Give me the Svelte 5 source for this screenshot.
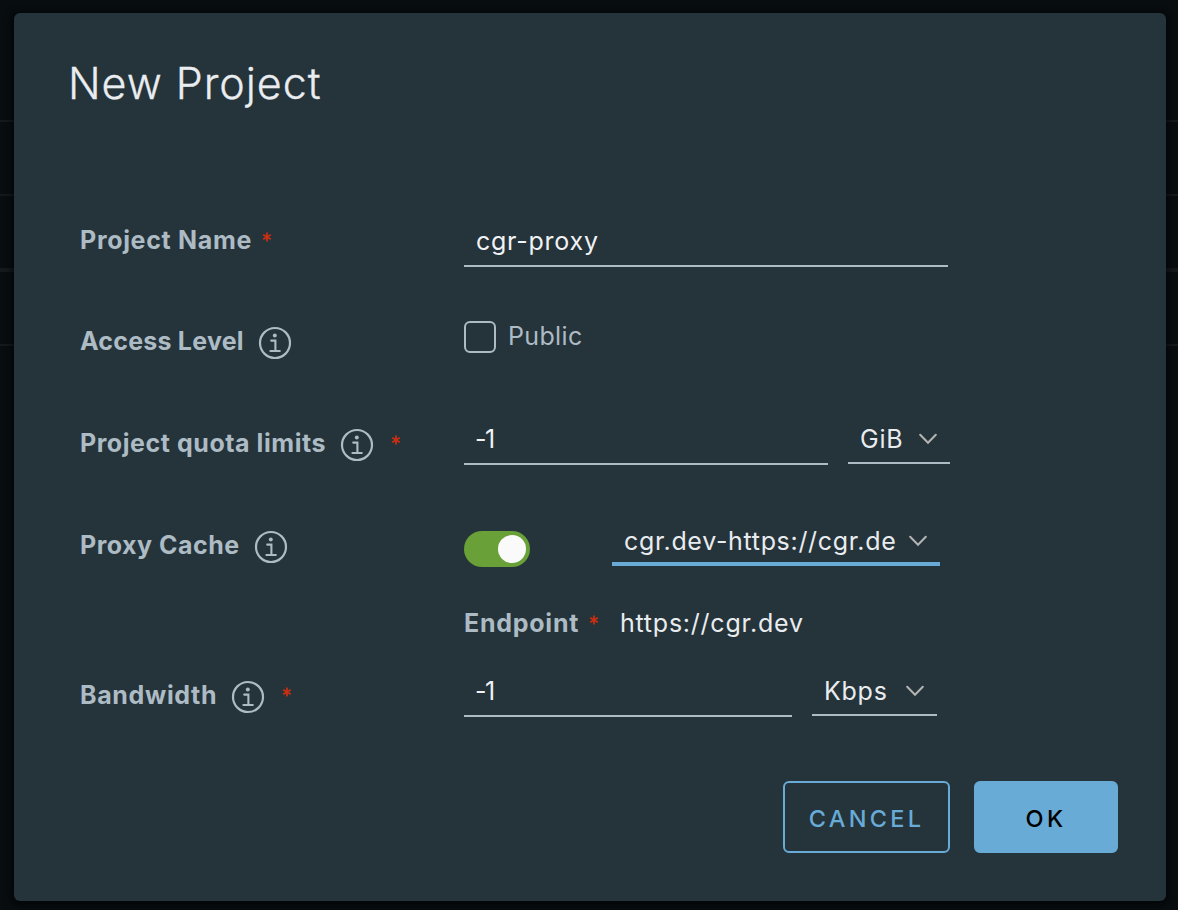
<script>
  let projectName = $state('cgr-proxy');
  let quota = $state('-1');
  let bandwidth = $state('-1');
</script>

{#snippet info()}
  <svg class="info" viewBox="0 0 36 36" width="36" height="36" aria-hidden="true">
    <circle cx="18" cy="18" r="15" fill="none" stroke="currentColor" stroke-width="2.2" />
    <circle cx="17.8" cy="10.4" r="2" fill="currentColor" />
    <path d="M14.2 15.6H18.4V25.8M13.4 26H22.8" fill="none" stroke="currentColor" stroke-width="2.1" stroke-linecap="round" />
  </svg>
{/snippet}

{#snippet star()}
  <svg class="star" viewBox="0 0 10 10" width="10" height="10" aria-label="required">
    <path d="M5 .6V9.4M1.2 2.8L8.8 7.2M8.8 2.8L1.2 7.2" fill="none" stroke="currentColor" stroke-width="1.8" />
  </svg>
{/snippet}

{#snippet chevron()}
  <svg class="chevron" viewBox="0 0 18 12" width="18" height="12" aria-hidden="true">
    <path d="M1.2 1.8L9 9.8L16.8 1.8" fill="none" stroke="currentColor" stroke-width="2" stroke-linecap="round" />
  </svg>
{/snippet}

<div class="page">
  <div class="lines"><i></i><i></i><i class="thick"></i><i></i></div>
  <div class="modal" role="dialog" aria-label="New Project">
    <h1>New Project</h1>
    <div class="form">
      <div class="row r1">
        <div class="label"><span class="t-name">Project Name</span>{@render star()}</div>
        <input class="name" bind:value={projectName} />
      </div>
      <div class="row r2">
        <div class="label"><span class="t-access">Access Level</span>{@render info()}</div>
        <div class="check"><span class="box"></span><span class="t-public">Public</span></div>
      </div>
      <div class="row r3">
        <div class="label"><span class="t-quota">Project quota limits</span>{@render info()}{@render star()}</div>
        <input class="quota" bind:value={quota} />
        <div class="select gib"><span>GiB</span>{@render chevron()}</div>
      </div>
      <div class="row r4">
        <div class="label"><span class="t-proxy">Proxy Cache</span>{@render info()}</div>
        <div class="toggle"><span></span></div>
        <div class="select registry"><span>cgr.dev-https://cgr.de</span>{@render chevron()}</div>
      </div>
      <div class="row endpoint">
        <div class="label"><span class="t-end">Endpoint</span>{@render star()}</div>
        <span class="url">https://cgr.dev</span>
      </div>
      <div class="row r5">
        <div class="label"><span class="t-band">Bandwidth</span>{@render info()}{@render star()}</div>
        <input class="band" bind:value={bandwidth} />
        <div class="select kbps"><span>Kbps</span>{@render chevron()}</div>
      </div>
    </div>
    <div class="footer">
      <button class="cancel">CANCEL</button>
      <button class="ok">OK</button>
    </div>
  </div>
</div>

<style>
  :global(body) { margin: 0; background: #080d10; }
  .page, .page * { box-sizing: border-box; }
  .page {
    width: 1178px; height: 910px; padding: 13px 12px 9px 14px; overflow: hidden;
    position: relative; background: #080d10;
    font-family: Inter, "Open Sans", sans-serif; font-size: 25px; color: #e9ecef;
  }
  .lines { position: absolute; inset: 0; display: flex; flex-direction: column; gap: 72px; padding-top: 120px; }
  .lines i { height: 2px; background: #15191c; }
  .lines .thick { height: 4px; }
  .modal {
    position: relative; width: 1152px; height: 888px; border-radius: 6px; background: #25333a;
    box-shadow: 0 2px 6px 4px rgba(0, 0, 0, .45); display: flex; flex-direction: column;
  }
  h1 { margin: 0; height: 200px; padding: 40px 0 0 54px; font-size: 43px; font-weight: 300; line-height: 60px; letter-spacing: .95px; color: #eaedf0; -webkit-text-stroke: .3px #eaedf0; }
  .row span { white-space: pre; }
  .form { padding-left: 66px; }
  .row { display: flex; align-items: flex-start; }
  .r1 { height: 101px; } .r2, .r3 { height: 102px; } .r4 { height: 78px; } .endpoint { height: 72px; } .r5 { height: 100px; }
  .label { width: 384px; height: 54px; display: flex; align-items: center; font-weight: 700; color: #adbbc4; line-height: 54px; }
  .t-name { letter-spacing: .68px; }
  .t-access { letter-spacing: .22px; }
  .t-quota { letter-spacing: .55px; }
  .t-proxy { letter-spacing: .5px; }
  .t-end { letter-spacing: .75px; }
  .t-band { letter-spacing: .65px; }
  .info { margin: 4px 0 0 13px; flex: none; color: #adbbc4; }
  .star { margin: -7px 0 0 9.5px; flex: none; color: #c92f12; }
  .info + .star { margin-left: 16px; }
  input {
    font: inherit; color: #f0f2f4; background: none; border: 0; border-bottom: 2px solid #adbbc4;
    border-radius: 0; outline: 0; padding: 0 12px; height: 54px;
  }
  .name { width: 484px; padding-top: 3px; letter-spacing: .75px; }
  .quota, .band { height: 49px; padding-bottom: 1px; padding-left: 11px; letter-spacing: -1.5px; }
  .quota { width: 364px; }
  .band { width: 328px; }
  .check { display: flex; gap: 12px; align-items: center; height: 32px; margin-top: 7px; color: #adbbc4; }
  .t-public { letter-spacing: .35px; margin-top: -2px; }
  .box { width: 32px; height: 32px; border: 2px solid #adbbc4; border-radius: 6px; }
  .select { display: flex; align-items: center; justify-content: space-between; height: 48px; padding: 0 13px 0 12px; border-bottom: 2px solid #adbbc4; margin-left: 20px; letter-spacing: .75px; }
  .chevron { color: #b3b3b3; flex: none; }
  .gib { width: 102px; }
  .kbps { width: 125px; }
  .registry { width: 328px; margin-left: 82px; padding-top: 2px; border-bottom: 4px solid #67abd6; letter-spacing: .68px; }
  .toggle { width: 66px; height: 36px; margin-top: 13px; border-radius: 18px; background: #69a037; padding: 4px; display: flex; justify-content: flex-end; }
  .toggle span { width: 28px; height: 28px; border-radius: 50%; background: #fafafa; }
  .endpoint { padding-left: 384px; }
  .endpoint .label { width: 156px; }
  .url { line-height: 54px; letter-spacing: .76px; }
  .footer { display: flex; justify-content: flex-end; gap: 24px; padding-right: 48px; margin-top: 13px; }
  button { height: 72px; border: 2px solid #67abd6; border-radius: 6px; font: 500 23.5px Inter, sans-serif; padding: 3px 0 0; letter-spacing: 3.3px; }
  .cancel { width: 167px; background: none; color: #67abd6; }
  .ok { width: 144px; background: #67abd6; color: #000; }
</style>
